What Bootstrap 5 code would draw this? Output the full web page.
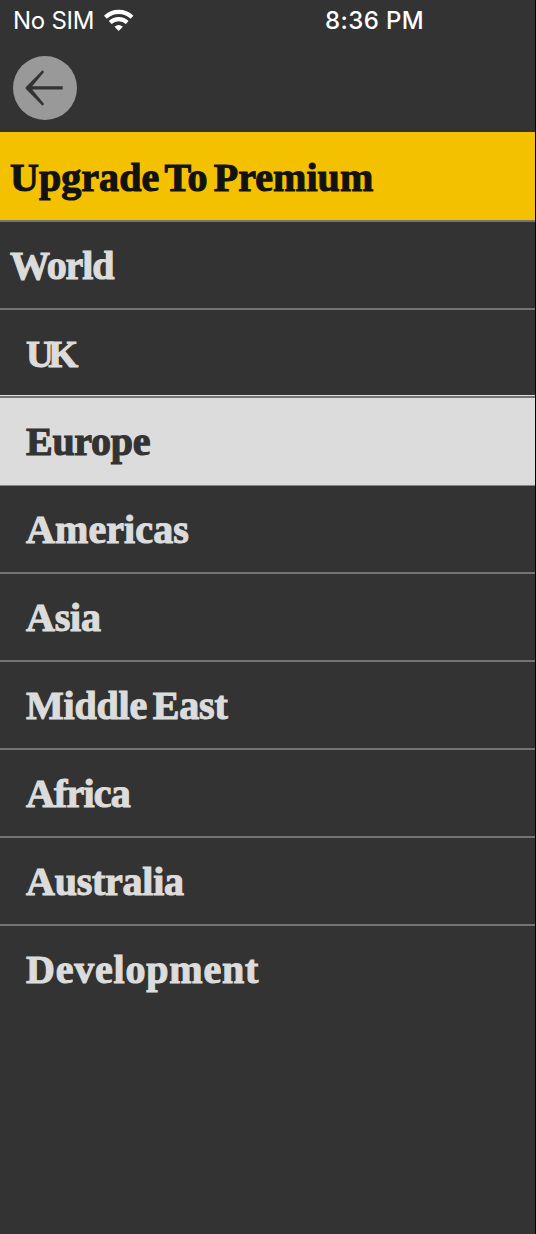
<!DOCTYPE html>
<html lang="en">
<head>
<meta charset="utf-8">
<meta name="viewport" content="width=device-width, initial-scale=1">
<title>Sections</title>
<link href="https://cdn.jsdelivr.net/npm/bootstrap@5.3.0/dist/css/bootstrap.min.css" rel="stylesheet">
<style>
body{background:#333;overflow:hidden}
.screen{height:1234px;border-right:1px solid #000}
.status{height:42px;padding-left:13px;font:400 24px/42px Inter,sans-serif;color:#fff}
.carrier{width:91px;letter-spacing:-.25px}
.clock{margin-left:191px;font-weight:500;letter-spacing:.4px}
.toolbar{height:90px;padding:14px 13px}
.back{width:64px;height:64px;background:#999}
.menu a{height:88px;padding:2px 0 0 26px;border-bottom:2px solid #757575;color:#dcdcdc;font:700 40px/1 "Liberation Serif",serif;-webkit-text-stroke:1.1px currentColor;word-spacing:-4px;white-space:nowrap}
.menu a.top-level{padding-left:10px}
.menu a.premium{height:90px;padding-top:4px;background:#f4c100;color:#121212}
.menu a.above{border-bottom-color:#767376;box-shadow:inset 0 -1px #dcdcdc}
.menu a.current{padding-top:1px;background:#dcdcdc;color:#333;border-bottom:1px solid #858585}
.menu a:last-child{border:0;padding-top:0}
.tight{font-size:38.5px}
</style>
</head>
<body>
<div class="screen d-flex flex-column">
  <header>
    <div class="status d-flex">
      <span class="carrier">No SIM</span>
      <svg width="30" height="42" viewBox="0 0 30 42" fill="none" stroke="#fff" stroke-width="4.1">
        <path d="M1.4 17.2a19.4 19.4 0 0 1 26.6 0"/><path d="M6.2 22.5a12.4 12.4 0 0 1 17 0"/>
        <path d="M14.7 31l-4.2-4.2q4.2-3.8 8.4 0z" fill="#fff" stroke="none"/>
      </svg>
      <span class="clock">8:36 PM</span>
    </div>
    <div class="toolbar">
      <button class="back btn rounded-circle border-0 p-0 d-block" aria-label="Back">
        <svg class="d-block" width="64" height="64" viewBox="0 0 64 64" fill="#333"><path d="M12.7 31.2L29.5 14.3l1.6 1.8-11.9 14.2H49.7v3.3H19.2l11.9 14.3-1.6 1.8L12.7 32.7z"/></svg>
      </button>
    </div>
  </header>
  <nav class="menu d-flex flex-column">
    <a class="top-level premium d-flex align-items-center text-decoration-none" href="#"><span style="letter-spacing:.05px">Upgrade To Premium</span></a>
    <a class="top-level d-flex align-items-center text-decoration-none" href="#"><span style="letter-spacing:-1.1px">World</span></a>
    <a class="above d-flex align-items-center text-decoration-none" href="#"><span class="tight" style="letter-spacing:-5.5px">UK</span></a>
    <a class="current d-flex align-items-center text-decoration-none" href="#"><span style="letter-spacing:-.3px">Europe</span></a>
    <a class="d-flex align-items-center text-decoration-none" href="#"><span style="letter-spacing:.1px">Americas</span></a>
    <a class="d-flex align-items-center text-decoration-none" href="#"><span style="letter-spacing:-.2px">Asia</span></a>
    <a class="d-flex align-items-center text-decoration-none" href="#"><span style="letter-spacing:-.2px">Middle East</span></a>
    <a class="d-flex align-items-center text-decoration-none" href="#"><span style="letter-spacing:-.8px">Africa</span></a>
    <a class="d-flex align-items-center text-decoration-none" href="#"><span style="letter-spacing:-.25px">Australia</span></a>
    <a class="d-flex align-items-center text-decoration-none" href="#"><span style="letter-spacing:.8px">Development</span></a>
  </nav>
</div>
<script src="https://cdn.jsdelivr.net/npm/bootstrap@5.3.0/dist/js/bootstrap.bundle.min.js"></script>
</body>
</html>
